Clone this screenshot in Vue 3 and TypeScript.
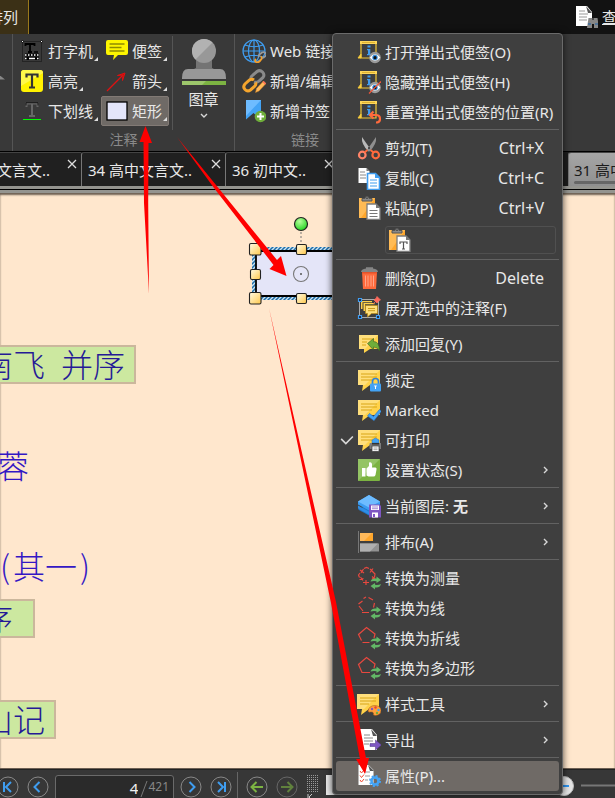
<script setup lang="ts">
import { ref } from 'vue'

interface MenuItem {
  label: string
  icon: string
  shortcut?: string
  strong?: string
  submenu?: boolean
  checked?: boolean
  active?: boolean
}

interface Tool {
  label: string
  icon: string
  selected?: boolean
}

const bubble =
  '<path d="M1 2h22v15H13l-8 6 1-6H1z" fill="#ffd24a"/><path d="M1 2h22L8 17H1z" fill="#ffdf7c"/><path d="M4 6h16M4 9h16M4 12h11" stroke="#d9a514" stroke-width="1" fill="none"/>'
const note =
  '<path d="M4 3v15h15V2" fill="none" stroke="#f2c534" stroke-width="1.2"/><path d="M3 1h17v3H3z" fill="#ffd75a"/><path d="M5 2.500h13" stroke="#c99a1a" stroke-width=".6"/><path d="M1 18l3-4v4z" fill="#ffd75a" stroke="#f2c534"/><path d="M10.500 5.500h3v2h-3zM10 9h3.300v5H14v1.300h-4V14h1v-3.700h-1z" fill="#3f9df0"/>'
const eye =
  '<circle cx="18" cy="17.500" r="5.800" fill="#9b9b9b"/><path d="M12.800 17.500q5.200-6.500 10.400 0-5.200 6.500-10.400 0z" fill="#fff"/><circle cx="18" cy="17.500" r="2.700" fill="#2f8be0"/><circle cx="18" cy="17.700" r="1.600" fill="#111"/>'
const board =
  '<path d="M2 2h16v20H2z" fill="#ffa62b"/><path d="M2 2h16L4 22H2z" fill="#ffbb55"/><path d="M5 5V2.500h3Q8 .5 10 .5t2 2h3V5z" fill="#8a8a8a" stroke="#555"/><circle cx="10" cy="2.300" r=".8" fill="#333"/>'
const frontDoc = '<path d="M10 8h9l4 4v11.500H10z" fill="#fff" stroke="#7c7c7c" stroke-width="1.300"/><path d="M19 8v4h4z" fill="#777"/>'
const page = '<path d="M3 1h12l5 6v15H3z" fill="#fff"/><path d="M14 1l6 7h-4z" fill="#555"/>'
const swap =
  '<path d="M13.500 15.500q1-3 4.500-3h1.500v-2l4.500 3.500-4.500 3v-1.800q-3.500-.5-6 .3zM24 18q-1 3.500-4.500 3.500H18v2l-4.500-3.500 4.500-3v1.800q3.500.5 6-.8z" fill="#62b866"/>'

const icons: Record<string, string> = {
  noteOpen: note + eye,
  noteHide: note + eye + '<path d="M12 23.500L24 11.500" stroke="#f0553a" stroke-width="1.200"/>',
  noteReset: note + '<path d="M16.500 11.500L13 15l3.500 3.500M13.500 15H19q4 0 4 4 0 3.500-4 3.500" fill="none" stroke="#ff6a3c" stroke-width="2.200"/>',
  cut: '<path d="M5 1l9 13-2.500 1.500Q4 8 5 1z" fill="#b9b9b9"/><path d="M19 1l-9 13 2.500 1.500Q20 8 19 1z" fill="#8f8f8f"/><circle cx="12" cy="12" r="1" fill="#333"/><circle cx="5.300" cy="19" r="3.300" fill="none" stroke="#ff8468" stroke-width="2.200"/><circle cx="18.700" cy="19" r="3.300" fill="none" stroke="#ff6a3c" stroke-width="2.200"/><path d="M7.500 16.500l3-2.500M16.500 16.500l-3-2.500" stroke="#ff6a3c" stroke-width="2"/>',
  copy: '<path d="M1.500 2h8l3 3v12h-11z" fill="#fff"/><path d="M9.500 2v3h3z" fill="#777"/><path d="M3 6h5M3 9h6M3 12h6" stroke="#888"/><path d="M10.500 7.500h8l4 4v12h-12z" fill="#fff" stroke="#3f9df0" stroke-width="1.600"/><path d="M18 7v5h5z" fill="#3f9df0"/><path d="M13 14h7M13 17h7M13 20h7" stroke="#3f9df0" stroke-width="1.200"/>',
  paste: board + frontDoc + '<path d="M12.500 14.500h8M12.500 17.500h8M12.500 20.500h8" stroke="#777"/>',
  pasteText: board + frontDoc + '<path d="M13 16v-2h7v2M16.500 14v7M15 21h3" fill="none" stroke="#555" stroke-width="1.200"/>',
  trash: '<path d="M4 6q0-3 5-3.500V1.300h7v1.200q5 .5 5 3.500z" fill="#858585"/><path d="M5 6h15l-1 17H6z" fill="#ff6a3c"/><path d="M5 6h15v1.500H5z" fill="#e4532b"/><path d="M8.500 9.500v11M11 9.500v11M14 9.500v11M16.500 9.500v11" stroke="#ffa58a"/>',
  expand: '<path d="M2.500 3.500h19v18h-19z" fill="none" stroke="#aaa"/><path d="M4 5h11v1.300H5.500V13H4zM6.500 7h11v1.300H8V15H6.500z" fill="#ffd24a"/><path d="M8.500 9.500h12v8h-6l-4 3.500v-3.500h-2z" fill="#ffe07c" stroke="#b98b14" stroke-width=".7"/><path d="M11 12.500h7M11 14.700h7" stroke="#c99a1a"/><path d="M1.500 2.500h3v3h-3zM1.500 19.500h3v3h-3zM19.500 19.500h3v3h-3z" fill="#223" stroke="#3f9df0" stroke-width="1.200"/><path d="M20 .500l3.500 3.500-1.500.5L20 7l-3-3L19.500 2zM18.500 5.500L16 8" fill="#ff6a5c" stroke="#ff6a5c" stroke-width=".8"/>',
  reply: '<path d="M2 3h19v14h-8l-6 4v-4H2z" fill="#ffd24a"/><path d="M2 3h19L8 17H2z" fill="#ffdf7c"/><path d="M5 7h12M5 10h5M5 13h4" stroke="#d9a514"/><path d="M10.500 11.500l6-5v3q6 0 6 9.500-2-4-6-4v3z" fill="#6fae3a" stroke="#3a5e1c" stroke-width=".6"/>',
  lock: bubble + '<path d="M15.500 16v-2.500q0-3 3-3t3 3V16" fill="none" stroke="#3182d6" stroke-width="1.700"/><rect x="13" y="15.500" width="11" height="8" rx="1" fill="#43a3f5"/><path d="M17 17.500h3l-1 1.500v2h-1v-2z" fill="#fff"/>',
  marked: bubble + '<path d="M10.500 18l2-2.500 4 3 6-7 2 1.700-7.500 9.500z" fill="#43a3f5" stroke="#2a6db0" stroke-width=".6"/>',
  print: bubble + '<path d="M15 15v-3l3.500-2 3.500 2v3z" fill="#43a3f5" stroke="#2c6aa8" stroke-width=".5"/><rect x="12.500" y="15" width="12" height="6" rx="1" fill="#7d7d7d"/><path d="M15 15h7v1.500h-7z" fill="#333"/><rect x="15" y="18" width="7" height="5.500" fill="#fff" stroke="#444" stroke-width=".8"/><path d="M16.500 20h4M16.500 21.700h4" stroke="#777" stroke-width=".7"/>',
  thumb: '<rect x="1" y="1" width="22" height="22" rx="1" fill="#7cb342"/><path d="M1 1h22L1 23z" fill="#94c465"/><path d="M5 10h3.500v8.500H5zM9.500 10.500L12 8V4.500q2.500-1 3 1.500v3.500h3.500q1.500.3 1 2l-1 5.500q-.5 1.500-2 1.500h-5l-2-1z" fill="#fff"/>',
  layers: '<path d="M1 15.500l11 6 11-6-11-5z" fill="#1f77cc"/><path d="M1 11.500l11 6 11-6v3l-11 6-11-6z" fill="#2f8ee6"/><path d="M1 7.500l11-6.500 11 6.500v3l-11 6-11-6z" fill="#3b9cf2"/><path d="M1 7.500L12 1l11 6.500-11 6z" fill="#6ebcff"/><path d="M12 10.500h10.500L24 12v11.500H12z" fill="#7e57c2"/><path d="M14 11.500h8v4.500h-8zM15 18.500h6v5h-6z" fill="#fff"/><path d="M15 13h6M15 14.700h6" stroke="#7e57c2" stroke-width=".7"/><path d="M16 20h2v3h-2z" fill="#7e57c2"/>',
  arrange: '<path d="M1.500 1v22" stroke="#777"/><path d="M3 3h13v8H3z" fill="#ffa62b"/><path d="M3 3h12L7 11H3z" fill="#ffb95a"/><path d="M3 13.500h19v8H3z" fill="#929292"/><path d="M3 13.500h18l-8 8H3z" fill="#b0b0b0"/>',
  toMeasure: '<path d="M7 2.500L9.500 1.500 12 2.500M3 7L1.500 9l1 2.500M16 6l2 2-.5 3M6 16.500h6M9 14v5M3 4l4 3M4 7l2.500-4M13 3l3 3M16 2.500l-3 4M2.500 13.500l4-1M3.500 11l2.500 3.500M15 10.500l3.500 3M15 13.500l3-3" fill="none" stroke="#e8483f" stroke-width="1.200"/>' + swap,
  toLine: '<path d="M6.500 2.500l2.500-1.500M11.500 1.500L16 4M17.500 7l-1 4.500M1.500 8l4 -3M2 10l4 5M5 16.500h7" fill="none" stroke="#e8483f" stroke-width="1.200"/>' + swap,
  toPolyline: '<path d="M4.500 14.500L1.500 8.500l8-7L18 8l-1 4M5.500 16.500h7" fill="none" stroke="#e8483f" stroke-width="1.200"/>' + swap,
  toPolygon: '<path d="M13 16.500H5L1.500 8.500l8-7L18 8l-1 4" fill="none" stroke="#e8483f" stroke-width="1.200"/>' + swap,
  style: '<path d="M0 2h22v15H12l-8 6 1-6H0z" fill="#ffd24a"/><path d="M0 2h22L7 17H0z" fill="#ffdf7c"/><path d="M3 6h16M3 9h16M3 12h9" stroke="#d9a514"/><path d="M11 19q1-5.500 7-5.500 6 .5 6 5t-5.500 5q-3 0-2-2.500-1-1.500-3-1-2.500.5-2.500-1z" fill="#ffa03a" stroke="#99541a" stroke-width=".5"/><circle cx="15" cy="17" r="1.200" fill="#7e57c2"/><circle cx="18.500" cy="15.500" r="1.200" fill="#e94235"/><circle cx="21.500" cy="18" r="1.200" fill="#43a3f5"/><circle cx="20" cy="21" r="1.200" fill="#6fae3a"/>',
  export: page + '<path d="M7 7h6M7 10h9M7 13h9M7 16h5" stroke="#888"/><path d="M13 15.500h5.500V12l6 5-6 5v-3.500H13z" fill="#7e57c2" stroke="#4a3380" stroke-width=".5"/>',
  props: '<path d="M1.500 1h10l5 5v15h-15z" fill="#fff"/><path d="M11 1l6 6h-4z" fill="#555"/><path d="M8 8h5M8 12h5M8 16h3" stroke="#999"/><path d="M3 7l1.500 2L7 6M3 11.500l1.500 2 2.500-3M3 16l1.500 2L7 15" fill="none" stroke="#f04a32"/><circle cx="18" cy="17" r="3.500" fill="none" stroke="#43a3f5" stroke-width="2.600"/><circle cx="18" cy="17" r="5" fill="none" stroke="#43a3f5" stroke-width="2" stroke-dasharray="2 1.930"/>',
  typewriter: '<path d="M2.500 2.500h19v20h-19z" fill="none" stroke="#111" stroke-dasharray="1 1"/><circle cx="2.500" cy="2.500" r="1" fill="#fff" stroke="#000"/><circle cx="21.500" cy="2.500" r="1" fill="#fff" stroke="#000"/><path d="M5.500 7V5h9v2M10 5v8M8 13h4" fill="none" stroke="#000" stroke-width="1.800"/><path d="M14 13h4" stroke="#000" stroke-width="1.500"/><path d="M5 16h14M5 19.500h14" stroke="#000" stroke-width="3"/><path d="M5 16h14M5 19.500h3M17 19.500h2" stroke="#fff" stroke-width="1.500" stroke-dasharray="1.500 1.500"/><path d="M9 19.500h6" stroke="#fff" stroke-width="1.500"/>',
  highlight: '<rect x="1" y="1" width="22" height="22" rx="3" fill="#fff200"/><path d="M1 17V4q0-3 3-3h16q3 0 3 3z" fill="#fff84a"/><path d="M6.500 8.500V5.500h11v3M12 5.500v13M9 18.500h6" fill="none" stroke="#333" stroke-width="2.200"/>',
  underline: '<path d="M6.500 8V4.500h11V8M12 5v12M9 17h6" fill="none" stroke="#666" stroke-width="2"/><path d="M6 6.500V3.700h12v2.800" fill="none" stroke="#161616" stroke-width="1"/><path d="M3 20.500h18" stroke="#0f0"/>',
  sticky: '<path d="M2 1h19q2 0 2 2v11q0 2-2 2H13l-5 5 1-5H3q-2 0-2-2V3q0-2 2-2z" fill="#fdf500"/><path d="M4.500 5h15M4.500 8.500h12M4.500 12h15" stroke="#8f8b00" stroke-width="1.300"/>',
  arrow: '<path d="M2 22L19 5" stroke="#e01010" stroke-width="1.300"/><path d="M12.500 6.500L20 4l-2.500 7.500L18 6z" fill="#c40d0d" stroke="#e01010"/>',
  rect: '<rect x="2" y="3" width="20" height="18" fill="#e4e5fa" stroke="#000" stroke-width="1.300"/>',
  web: '<g fill="none" stroke="#3f9df0" stroke-width="1.200"><circle cx="12" cy="12" r="11"/><ellipse cx="12" cy="12" rx="5.500" ry="11"/><path d="M12 1v22M1 12h22M3 6q9 3.500 18 0M3 18q9-3.500 18 0"/></g><g fill="none" stroke-width="1.800"><path d="M14 20q-2 2 0 3 2 1 4-1l1.500-2q1-2-1-2.500" stroke="#f59d28"/><path d="M17 18q-1-1 1-3l2-1.500q2-1 3.500.5t0 3L21 19" stroke="#999"/></g>',
  link: '<g fill="none" stroke-width="3"><path d="M9 11q-1-3 2-5l4-3.500q3-2 5.500.5t.5 5.500l-4 3.500q-2 2-5 1" stroke="#8a8a8a"/><path d="M12 11q-2-1.500-4.500 0l-4.500 4q-2.500 3 0 5.500t5.500.5l4-3.500q2-2 1-4" stroke="#f5a52d"/></g><path d="M21.500 12l2.500 2.500-7 7.500-3.500 1.500 1-4z" fill="#ffb95a" stroke="#d07e1c" stroke-width=".5"/><path d="M20.500 13l2.500 2.500 1-1-2.500-2.500z" fill="#ff6a5c"/>',
  bookmark: '<path d="M4 1h15v20l-7.500-7L4 20.500z" fill="#43a3f5"/><path d="M4 1h15L4 17z" fill="#6ebcff"/><circle cx="18.500" cy="17.500" r="5.800" fill="#6fae3a"/><path d="M18.500 14v7M15 17.500h7" stroke="#fff" stroke-width="2"/>',
  search: '<path d="M2 1h11l5 6v14H2z" fill="#fff"/><path d="M12 1l6 7h-4z" fill="#555"/><path d="M5 6h6M5 9h9M5 12h8M5 15h8" stroke="#999"/><path d="M14.500 13h4v2h1v-2h4l1.500 10h-5v-4h-2v4h-5z" fill="#868686"/><path d="M14 19h3M21 19h3" stroke="#3f6f9f" stroke-width="1.500"/>',
}

const groups: MenuItem[][] = [
  [
    { label: '打开弹出式便签(O)', icon: 'noteOpen' },
    { label: '隐藏弹出式便签(H)', icon: 'noteHide' },
    { label: '重置弹出式便签的位置(R)', icon: 'noteReset' },
  ],
  [
    { label: '剪切(T)', icon: 'cut', shortcut: 'Ctrl+X' },
    { label: '复制(C)', icon: 'copy', shortcut: 'Ctrl+C' },
    { label: '粘贴(P)', icon: 'paste', shortcut: 'Ctrl+V' },
  ],
  [
    { label: '删除(D)', icon: 'trash', shortcut: 'Delete' },
    { label: '展开选中的注释(F)', icon: 'expand' },
  ],
  [{ label: '添加回复(Y)', icon: 'reply' }],
  [
    { label: '锁定', icon: 'lock' },
    { label: 'Marked', icon: 'marked' },
    { label: '可打印', icon: 'print', checked: true },
    { label: '设置状态(S)', icon: 'thumb', submenu: true },
  ],
  [{ label: '当前图层:', strong: '无', icon: 'layers', submenu: true }],
  [{ label: '排布(A)', icon: 'arrange', submenu: true }],
  [
    { label: '转换为测量', icon: 'toMeasure' },
    { label: '转换为线', icon: 'toLine' },
    { label: '转换为折线', icon: 'toPolyline' },
    { label: '转换为多边形', icon: 'toPolygon' },
  ],
  [{ label: '样式工具', icon: 'style', submenu: true }],
  [{ label: '导出', icon: 'export', submenu: true }],
  [{ label: '属性(P)...', icon: 'props', active: true }],
]

const textTools: Tool[] = [
  { label: '打字机', icon: 'typewriter' },
  { label: '高亮', icon: 'highlight' },
  { label: '下划线', icon: 'underline' },
]
const shapeTools: Tool[] = [
  { label: '便签', icon: 'sticky' },
  { label: '箭头', icon: 'arrow' },
  { label: '矩形', icon: 'rect', selected: true },
]
const linkTools: Tool[] = [
  { label: 'Web 链接', icon: 'web' },
  { label: '新增/编辑', icon: 'link' },
  { label: '新增书签', icon: 'bookmark' },
]
const tabs = ['文言文..', '34 高中文言文..', '36 初中文..']
const pageNumber = ref('4')
</script>

<template>
  <div class="app">
    <header class="topbar">
      <button class="ribbon-tab"><span>排列</span></button>
      <button class="find">
        <svg class="ico" viewBox="0 0 24 24" v-html="icons.search"></svg>
        <span>查</span>
      </button>
    </header>

    <section class="ribbon">
      <div class="group group-prev"><i class="prev-mark"></i></div>
      <div class="group group-annot">
        <div class="tools">
          <div v-for="(col, c) in [textTools, shapeTools]" :key="c" class="col">
            <button v-for="t in col" :key="t.label" class="tool" :class="{ selected: t.selected }">
              <svg class="ico" viewBox="0 0 24 24" v-html="icons[t.icon]"></svg>
              <span>{{ t.label }}</span>
              <i class="corner"></i>
            </button>
          </div>
          <button class="stamp">
            <svg class="stamp-ico" viewBox="0 0 46 48">
              <path d="M17 20h12l-1 6q0 4 5 5h6q6 0 6 9v1H1v-1q0-9 6-9h6q5-1 5-5z" fill="#989898" />
              <path d="M15 22h16v9H15z" fill="#747474" />
              <circle cx="23" cy="13" r="12" fill="#989898" />
              <path d="M14.500 21.500A12 12 0 0 1 31.500 4.500z" fill="#b2b2b2" />
              <path d="M1 43h44v4H1z" fill="#7cb342" />
              <path d="M1 43h24l-4 4H1z" fill="#9cc66b" />
            </svg>
            <span>图章</span>
            <svg class="chev-down" viewBox="0 0 8 6"><path d="M1 1l3 3 3-3" /></svg>
          </button>
        </div>
        <div class="group-name">注释</div>
      </div>
      <div class="group group-link">
        <div class="tools">
          <div class="col">
            <button v-for="t in linkTools" :key="t.label" class="tool">
              <svg class="ico" viewBox="0 0 24 24" v-html="icons[t.icon]"></svg>
              <span>{{ t.label }}</span>
            </button>
          </div>
        </div>
        <div class="group-name">链接</div>
      </div>
    </section>

    <nav class="tabs">
      <div v-for="t in tabs" :key="t" class="tab">
        <a href="#">{{ t }}</a>
        <button class="close" aria-label="×">
          <svg viewBox="0 0 10 10"><path d="M1 1l8 8M9 1l-8 8" /></svg>
        </button>
      </div>
      <div class="tab active"><a href="#">31 高中</a></div>
    </nav>

    <main class="doc">
      <div class="lines">
        <p class="line boxed"><span>南飞</span><span>并序</span></p>
        <p class="line indent far"><span>蓉</span></p>
        <p class="line indent far paren"><i>(</i><span>其一</span><i>)</i></p>
        <p class="line boxed near wide"><span>序</span></p>
        <p class="line boxed far"><span>山记</span></p>
      </div>

      <svg class="selection" viewBox="0 0 130 100">
        <defs>
          <pattern id="hatch" width="4" height="4" patternUnits="userSpaceOnUse">
            <rect width="4" height="4" fill="#cfe4f2" />
            <path d="M-1 5L5 -1M-1 1L1 -1M3 5L5 3" stroke="#1d6ea8" stroke-width="1.500" />
          </pattern>
          <linearGradient id="handle" x1="0" y1="0" x2="1" y2="1">
            <stop offset="0" stop-color="#fffbe6" />
            <stop offset="1" stop-color="#ffc84a" />
          </linearGradient>
          <radialGradient id="ball" cx=".4" cy=".3" r=".8">
            <stop offset="0" stop-color="#b6ff9c" />
            <stop offset="1" stop-color="#14cf14" />
          </radialGradient>
        </defs>
        <path d="M7 32h123v53H7z" fill="url(#hatch)" />
        <path d="M11 36h130v45H11z" fill="#e4e5f8" stroke="#000" stroke-width="1.800" />
        <path d="M56 17v14" stroke="#aaa097" stroke-width="1.600" stroke-dasharray="2 2" />
        <circle cx="56" cy="9" r="6.500" fill="url(#ball)" stroke="#222" stroke-width="1.200" />
        <circle cx="56" cy="59" r="7.500" fill="none" stroke="#777" stroke-width="1.100" />
        <circle cx="56" cy="59" r="1" fill="#555" />
        <g fill="url(#handle)" stroke="#222" stroke-width="1.100">
          <rect x="4.500" y="28.500" width="11.500" height="11.500" rx="1.500" />
          <rect x="4.500" y="77.500" width="11.500" height="11.500" rx="1.500" />
          <rect x="5.500" y="54.500" width="10" height="10" rx="1.500" />
          <rect x="51.500" y="29.500" width="10" height="10" rx="1.500" />
          <rect x="51.500" y="78.500" width="10" height="10" rx="1.500" />
        </g>
      </svg>
    </main>

    <footer class="status">
      <button class="nav-btn" aria-label="|&lt;">
        <svg viewBox="0 0 22 22"><circle cx="11" cy="11" r="10" /><path class="blue" d="M7 6v10M14 6l-5 5 5 5" /></svg>
      </button>
      <button class="nav-btn" aria-label="&lt;">
        <svg viewBox="0 0 22 22"><circle cx="11" cy="11" r="10" /><path class="blue" d="M12.500 6l-5 5 5 5" /></svg>
      </button>
      <label class="page-box">
        <input v-model="pageNumber" aria-label="4/421" />
        <svg class="slash" viewBox="0 0 8 18"><path d="M1 17L7 1" /></svg>
        <span>421</span>
      </label>
      <button class="nav-btn" aria-label="&gt;">
        <svg viewBox="0 0 22 22"><circle cx="11" cy="11" r="10" /><path class="blue" d="M9.500 6l5 5-5 5" /></svg>
      </button>
      <button class="nav-btn" aria-label="&gt;|">
        <svg viewBox="0 0 22 22"><circle cx="11" cy="11" r="10" /><path class="blue" d="M15 6v10M8 6l5 5-5 5" /></svg>
      </button>
      <span class="history">
        <button class="nav-btn" aria-label="←">
          <svg viewBox="0 0 22 22"><circle cx="11" cy="11" r="10" /><path class="green" d="M17 11H6M10.500 6l-5 5 5 5" /></svg>
        </button>
        <button class="nav-btn dim" aria-label="→">
          <svg viewBox="0 0 22 22"><circle cx="11" cy="11" r="10" /><path class="green" d="M5 11h11M11.500 6l5 5-5 5" /></svg>
        </button>
      </span>
      <span class="grip">
        <i></i>
        <svg viewBox="0 0 8 8"><path d="M2 1v6M6 1L3 4l3 3" /></svg>
      </span>
      <i class="view-mode"></i>
      <svg class="zoom-slider" viewBox="0 0 70 22">
        <path d="M36 10.500h34" stroke="#777" stroke-width="2" />
        <circle cx="19" cy="11" r="9.500" fill="#e4e4e4" stroke="#bbb" />
        <path d="M13 11h11" stroke="#2f96f3" stroke-width="2" />
      </svg>
    </footer>

    <div class="menu" role="menu">
      <template v-for="(g, gi) in groups" :key="gi">
        <hr v-if="gi > 0" />
        <button v-for="m in g" :key="m.label" class="item" :class="{ active: m.active }" role="menuitem">
          <span class="mark"><svg v-if="m.checked" viewBox="0 0 12 10"><path d="M1 4l4 4 6-6" /></svg></span>
          <svg class="ico" viewBox="0 0 24 24" v-html="icons[m.icon]"></svg>
          <span class="label">{{ m.label }} <b v-if="m.strong">{{ m.strong }}</b></span>
          <span v-if="m.shortcut" class="shortcut">{{ m.shortcut }}</span>
          <svg v-if="m.submenu" class="chev" viewBox="0 0 6 8"><path d="M1 1l3 3-3 3" /></svg>
        </button>
        <div v-if="gi === 1" class="paste-row">
          <button aria-label="T"><svg class="ico" viewBox="0 0 24 24" v-html="icons.pasteText"></svg></button>
        </div>
      </template>
    </div>

    <svg class="arrows" viewBox="0 0 615 798">
      <path d="M145.500 126l6.500 17h-3.500l-.3 60L149 294l-5-91-.5-61h-4z" />
      <path d="M177 137L277 260l4-4 5.500 20-17-7 4-4L214 188z" />
      <path d="M269 308L336 602l30 156h3l-4 16-9-15h4L331 603z" />
    </svg>
  </div>
</template>

<style>
body {
  margin: 0;
  background: #121212;
}
</style>

<style scoped>
.app {
  position: relative;
  display: flex;
  flex-direction: column;
  height: 100vh;
  overflow: hidden;
  color: #e8e8e8;
  font: 15px/20px 'Noto Sans', 'Noto Sans CJK SC', sans-serif;
}
button {
  padding: 0;
  border: 0;
  background: none;
  color: inherit;
  font: inherit;
  text-align: left;
  white-space: nowrap;
}
a {
  color: inherit;
  text-decoration: none;
}
i {
  font-style: normal;
}
.ico {
  flex: none;
  width: 24px;
  height: 24px;
}
.topbar {
  display: flex;
  flex: none;
  justify-content: space-between;
  height: 34px;
  background: #121212;
}
.ribbon-tab {
  display: flex;
  justify-content: flex-end;
  align-items: center;
  width: 29px;
  padding-right: 10px;
  box-sizing: border-box;
  border-right: 1px solid #9a7a1c;
  background: #3b3016;
}
.find {
  display: flex;
  align-items: center;
  gap: 4px;
  width: 41px;
}
.find span {
  text-decoration: underline;
}
.ribbon {
  display: flex;
  flex: none;
  height: 117px;
  background: #393939;
}
.group {
  display: flex;
  flex-direction: column;
  border-right: 1px solid #555;
}
.group-prev {
  justify-content: center;
  width: 12px;
}
.prev-mark {
  width: 5px;
  height: 4px;
  margin-bottom: 30px;
  background: #888;
  clip-path: polygon(0 0, 100% 100%, 0 100%);
}
.group-annot {
  width: 221px;
}
.group-link {
  width: 140px;
}
.tools {
  display: flex;
  flex: 1;
  padding-top: 2px;
}
.col {
  display: flex;
  flex-direction: column;
}
.group-annot .col:first-child {
  width: 88px;
  padding-left: 3px;
  box-sizing: border-box;
}
.group-annot .col:nth-child(2) {
  width: 72px;
  box-sizing: border-box;
  border-right: 1px solid #555;
}
.group-link .col {
  padding-left: 3px;
}
.tool {
  position: relative;
  display: flex;
  align-items: center;
  gap: 4px;
  align-self: flex-start;
  height: 30px;
  box-sizing: border-box;
  padding: 0 6px 0 3px;
  border: 1px solid transparent;
  border-radius: 2px;
}
.group-annot .col:nth-child(2) .tool {
  gap: 3px;
}
.tool.selected {
  border-color: #827a75;
  background: #6f6a66;
}
.corner {
  position: absolute;
  right: 1px;
  bottom: 4px;
  width: 4px;
  height: 4px;
  background: #ddd;
  clip-path: polygon(100% 0, 100% 100%, 0 100%);
}
.stamp {
  display: flex;
  flex: 1;
  flex-direction: column;
  align-items: center;
  padding-top: 2px;
}
.stamp-ico {
  width: 46px;
  height: 48px;
}
.stamp span {
  margin-top: 3px;
}
.chev-down {
  width: 8px;
  height: 6px;
  margin-top: 4px;
}
.chev-down path,
.chev path,
.mark path {
  fill: none;
  stroke: #d8d8d8;
  stroke-width: 1.400;
}
.group-name {
  padding-bottom: 1px;
  color: #8a8a8a;
  font-size: 14px;
  text-align: center;
}
.tabs {
  display: flex;
  flex: none;
  height: 34px;
  border-top: 1px solid #000;
  background: #1c1c1c;
}
.tab {
  display: flex;
  width: 144px;
  padding: 0 4px 0 6px;
  box-sizing: border-box;
  justify-content: space-between;
  align-items: center;
  border-left: 1px solid #777;
  border-top: 1px solid #444;
  border-top-left-radius: 3px;
  background: #202020;
  white-space: nowrap;
}
.tab:first-child {
  width: 91px;
  margin-left: -10px;
}
.tab:nth-child(3) {
  width: 113px;
}
.tab.active {
  position: relative;
  width: 47px;
  margin-left: auto;
  padding: 0 0 0 5px;
  background: linear-gradient(#a6a6a6, #8f8f8f);
  color: #1a1a1a;
}
.tab.active::after {
  content: '';
  position: absolute;
  right: 0;
  bottom: 2px;
  left: 5px;
  height: 3px;
  border-radius: 2px 0 0 2px;
  background: #666;
}
.close {
  width: 10px;
  height: 10px;
  margin-bottom: 12px;
  line-height: 0;
}
.close svg {
  width: 10px;
  height: 10px;
}
.close path {
  stroke: #ddd;
  stroke-width: 1.300;
}
.doc {
  position: relative;
  flex: 1;
  min-height: 0;
  overflow: hidden;
  border-top: 3px solid #94948f;
  border-bottom: 1px solid #6d5f52;
  background: #ffe7cd;
  box-shadow: inset 0 1px #000, inset 0 4px #94948f, inset 0 6px 2px #6d5f52;
}
.lines {
  display: flex;
  flex-direction: column;
  align-items: flex-start;
  margin-left: -21px;
  padding-top: 156px;
}
.line {
  display: flex;
  gap: 16px;
  height: 35px;
  margin: 0;
  padding: 0 9px 0 0;
  border: 2px solid transparent;
  color: #3418c4;
  font: 300 32px/32px 'Noto Sans CJK SC', sans-serif;
  white-space: nowrap;
}
.line.boxed {
  border-color: #cbb79c;
  background: #cce8a0;
  color: #251a96;
}
.line.indent {
  padding-left: 16px;
}
.line.paren {
  gap: 0;
}
.line.paren i {
  width: 16px;
  text-align: center;
}
.line.wide {
  padding-right: 20px;
}
.far {
  margin-top: 62px;
}
.near {
  margin-top: 13px;
}
.selection {
  position: absolute;
  top: 26px;
  left: 245px;
  width: 130px;
  height: 100px;
}
.status {
  display: flex;
  flex: none;
  gap: 8px;
  align-items: flex-start;
  height: 23px;
  padding-top: 5px;
  overflow: hidden;
  border-top: 1px solid #222;
  background: #373737;
}
.nav-btn {
  flex: none;
  width: 22px;
  height: 22px;
  margin-top: 1px;
}
.status > .nav-btn:first-child {
  margin-left: -3px;
}
.nav-btn svg {
  display: block;
  width: 22px;
  height: 22px;
  fill: none;
}
.nav-btn circle {
  stroke: #888;
}
.nav-btn path {
  stroke-width: 2;
}
.blue {
  stroke: #3f9df0;
}
.green {
  stroke: #7cb342;
}
.dim {
  opacity: 0.6;
}
.page-box {
  display: flex;
  flex: none;
  width: 119px;
  height: 26px;
  margin-right: -2px;
  margin-left: -2px;
  padding-right: 4px;
  box-sizing: border-box;
  border: 1px solid #6a6a6a;
  border-radius: 3px;
  background: #2a2a2a;
  color: #888;
  font-size: 12px;
  line-height: 22px;
}
.page-box input {
  flex: 1;
  min-width: 0;
  padding: 0 2px 0 0;
  border: 0;
  outline: 0;
  background: none;
  color: #f0f0f0;
  font: 15px/24px 'Noto Sans', sans-serif;
  text-align: right;
}
.slash {
  width: 8px;
  height: 18px;
  margin-top: 4px;
}
.slash path {
  stroke: #777;
}
.history {
  display: flex;
  flex: none;
  gap: 8px;
  height: 30px;
  margin-top: -3px;
  margin-left: -3px;
  padding-top: 3px;
  padding-left: 8px;
  border-left: 1px solid #666;
}
.grip {
  flex: none;
  width: 12px;
  margin-top: -1px;
  line-height: 0;
}
.grip i {
  display: block;
  height: 18px;
  background:
    repeating-linear-gradient(90deg, #373737 0 1px, transparent 1px 2px),
    repeating-linear-gradient(#373737 0 1px, #999 1px 2px);
}
.grip svg {
  width: 8px;
  height: 8px;
  margin-top: 1px;
  fill: none;
  stroke: #ccc;
}
.view-mode {
  width: 20px;
  height: 20px;
  background: #e8e8e8;
}
.zoom-slider {
  flex: none;
  width: 70px;
  height: 22px;
  margin-left: auto;
}
.menu {
  position: absolute;
  top: 33px;
  left: 332px;
  width: 231px;
  padding: 3px;
  box-sizing: border-box;
  border: 1px solid #6a6a6a;
  border-radius: 4px;
  background: #3f3f3f;
  box-shadow: 0 0 7px rgba(0, 0, 0, 0.7);
}
.menu hr {
  height: 1px;
  margin: 2px 0 3px;
  border: 0;
  background: #626262;
}
.item {
  display: flex;
  align-items: center;
  width: 100%;
  height: 30px;
  border-radius: 3px;
}
.item.active {
  background: #6f6a66;
}
.mark {
  flex: none;
  width: 17px;
  padding-left: 4px;
  line-height: 0;
}
.mark svg {
  width: 14px;
  height: 12px;
}
.label {
  flex: 1;
  padding-left: 4px;
}
.shortcut {
  padding-right: 15px;
  font-size: 16px;
}
.chev {
  width: 6px;
  height: 8px;
  margin-right: 10px;
}
.paste-row {
  height: 34px;
  padding: 3px 3px 3px 49px;
  box-sizing: border-box;
}
.paste-row button {
  display: flex;
  align-items: center;
  width: 100%;
  height: 28px;
  padding-left: 1px;
  border: 1px solid #505050;
  border-radius: 3px;
}
.arrows {
  position: absolute;
  top: 0;
  left: 0;
  width: 615px;
  height: 798px;
  fill: #f00;
  pointer-events: none;
}
</style>
